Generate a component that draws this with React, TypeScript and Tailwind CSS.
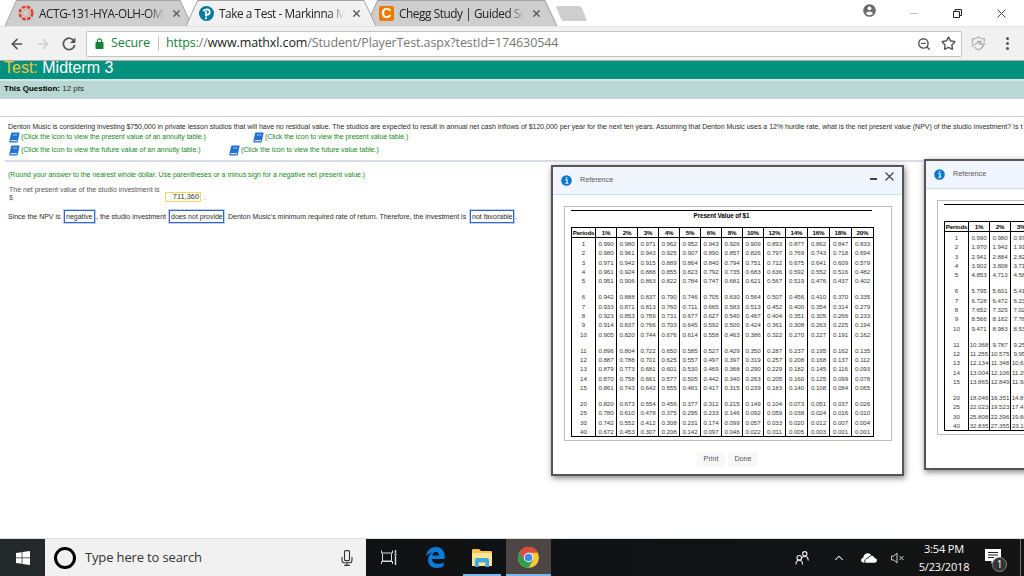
import type { ReactNode } from 'react';
import { ArrowLeft, ArrowRight, ChevronUp, Star, X, ZoomOut } from 'lucide-react';
import { clsx } from 'clsx';

const pvRates = ['1%', '2%', '3%', '4%', '5%', '6%', '8%', '10%', '12%', '14%', '16%', '18%', '20%'];

const pvBlocks = [
  [
    '1 0.990 0.980 0.971 0.962 0.952 0.943 0.926 0.909 0.893 0.877 0.862 0.847 0.833',
    '2 0.980 0.961 0.943 0.925 0.907 0.890 0.857 0.826 0.797 0.769 0.743 0.718 0.694',
    '3 0.971 0.942 0.915 0.889 0.864 0.840 0.794 0.751 0.712 0.675 0.641 0.609 0.579',
    '4 0.961 0.924 0.888 0.855 0.823 0.792 0.735 0.683 0.636 0.592 0.552 0.516 0.482',
    '5 0.951 0.906 0.863 0.822 0.784 0.747 0.681 0.621 0.567 0.519 0.476 0.437 0.402',
  ],
  [
    '6 0.942 0.888 0.837 0.790 0.746 0.705 0.630 0.564 0.507 0.456 0.410 0.370 0.335',
    '7 0.933 0.871 0.813 0.760 0.711 0.665 0.583 0.513 0.452 0.400 0.354 0.314 0.279',
    '8 0.923 0.853 0.789 0.731 0.677 0.627 0.540 0.467 0.404 0.351 0.305 0.266 0.233',
    '9 0.914 0.837 0.766 0.703 0.645 0.592 0.500 0.424 0.361 0.308 0.263 0.225 0.194',
    '10 0.905 0.820 0.744 0.676 0.614 0.558 0.463 0.386 0.322 0.270 0.227 0.191 0.162',
  ],
  [
    '11 0.896 0.804 0.722 0.650 0.585 0.527 0.429 0.350 0.287 0.237 0.195 0.162 0.135',
    '12 0.887 0.788 0.701 0.625 0.557 0.497 0.397 0.319 0.257 0.208 0.168 0.137 0.112',
    '13 0.879 0.773 0.681 0.601 0.530 0.469 0.368 0.290 0.229 0.182 0.145 0.116 0.093',
    '14 0.870 0.758 0.661 0.577 0.505 0.442 0.340 0.263 0.205 0.160 0.125 0.099 0.078',
    '15 0.861 0.743 0.642 0.555 0.481 0.417 0.315 0.239 0.183 0.140 0.108 0.084 0.065',
  ],
  [
    '20 0.820 0.673 0.554 0.456 0.377 0.312 0.215 0.149 0.104 0.073 0.051 0.037 0.026',
    '25 0.780 0.610 0.478 0.375 0.295 0.233 0.146 0.092 0.059 0.038 0.024 0.016 0.010',
    '30 0.742 0.552 0.412 0.308 0.231 0.174 0.099 0.057 0.033 0.020 0.012 0.007 0.004',
    '40 0.672 0.453 0.307 0.208 0.142 0.097 0.046 0.022 0.011 0.005 0.003 0.001 0.001',
  ],
];

const annuityRates = ['1%', '2%', '3%'];

const annuityBlocks = [
  ['1 0.990 0.980 0.971', '2 1.970 1.942 1.913', '3 2.941 2.884 2.829', '4 3.902 3.808 3.717', '5 4.853 4.713 4.580'],
  ['6 5.795 5.601 5.417', '7 6.728 6.472 6.230', '8 7.652 7.325 7.020', '9 8.566 8.162 7.786', '10 9.471 8.983 8.530'],
  [
    '11 10.368 9.787 9.253',
    '12 11.255 10.575 9.954',
    '13 12.134 11.348 10.635',
    '14 13.004 12.106 11.296',
    '15 13.865 12.849 11.938',
  ],
  ['20 18.046 16.351 14.877', '25 22.023 19.523 17.413', '30 25.808 22.396 19.600', '40 32.835 27.355 23.115'],
];

function ChromeTab({ icon, title, active, className }: { icon: ReactNode; title: string; active?: boolean; className: string }) {
  return (
    <div className={clsx('relative h-[26px] shrink-0', className)}>
      <svg className="absolute inset-0 h-full w-full" viewBox="0 0 190 26" preserveAspectRatio="none">
        <path
          d="M0 26 L11.5 0.5 H178 L190 26"
          fill={active ? '#f1f1f1' : '#cecece'}
          stroke="#a3a3a3"
          strokeWidth="1"
        />
      </svg>
      <div className="relative flex h-full items-center pl-[13px]">
        {icon}
        <div className="ml-[5px] w-[127px] [mask-image:linear-gradient(to_right,black_86%,transparent_99%)] text-[11.8px] leading-[26px] tracking-[-0.42px] whitespace-nowrap text-[#222]">
          {title}
        </div>
        <X className="ml-[5px] h-[11px] w-[11px] shrink-0 text-[#555]" strokeWidth={2.6} />
      </div>
    </div>
  );
}

function CanvasLogo() {
  return (
    <svg className="h-4 w-4 shrink-0" viewBox="0 0 16 16">
      <circle cx="8" cy="8" r="6.3" fill="none" stroke="#e2402f" strokeWidth="2.6" strokeDasharray="3.6 1.35" />
      <circle cx="8" cy="8" r="3.5" fill="none" stroke="#e2402f" strokeWidth="1" strokeDasharray="1 1.75" />
    </svg>
  );
}

function PearsonLogo() {
  return (
    <svg className="h-[15px] w-[15px] shrink-0" viewBox="0 0 15 15">
      <circle cx="7.5" cy="7.5" r="7.5" fill="#047a9c" />
      <path d="M4.3 5.2 Q5.5 3.4 7.9 3.4 Q10.8 3.6 10.8 6.2 Q10.6 8.7 7.6 8.8" fill="none" stroke="#fff" strokeWidth="1.8" />
      <path d="M7 5.2 V10.6" stroke="#fff" strokeWidth="1.9" />
      <circle cx="7" cy="12.3" r="1" fill="#fff" />
    </svg>
  );
}

function CheggLogo() {
  return (
    <div className="flex h-[15px] w-[15px] shrink-0 items-center justify-center rounded-[2px] bg-[#f07a00] font-['Liberation_Sans',sans-serif] text-[14px] leading-none font-bold text-white">
      C
    </div>
  );
}

function TitleBar() {
  return (
    <div className="flex h-[26px] items-start bg-white">
      <ChromeTab className="ml-[5px] w-[187px]" icon={<CanvasLogo />} title="ACTG-131-HYA-OLH-OMI" />
      <ChromeTab className="z-10 -ml-[6px] w-[190px]" icon={<PearsonLogo />} title="Take a Test - Markinna Mc" active />
      <ChromeTab className="-ml-[10px] w-[191px]" icon={<CheggLogo />} title="Chegg Study | Guided Sol" />
      <svg className="mt-[6px] -ml-[2px] h-[15px] w-[32px] shrink-0" viewBox="0 0 32 15">
        <path d="M1 0 H24 Q26 0 27 2 L32 15 H9 Q7 15 6 13 Z" fill="#cecece" />
      </svg>
      <div className="flex-1" />
      <svg className="mt-[4px] mr-[34px] h-[13px] w-[13px]" viewBox="0 0 13 13">
        <circle cx="6.5" cy="6.5" r="6.3" fill="#6b6b6b" />
        <circle cx="6.5" cy="4.3" r="1.9" fill="#fff" />
        <path d="M2.8 9.3 Q4.2 7.4 6.5 7.4 T10.2 9.3 Q8.8 11.3 6.5 11.3 T2.8 9.3 Z" fill="#fff" />
      </svg>
      <div className="mt-[13px] mr-[35px] h-px w-[8px] bg-[#c4c4c4]" />
      <svg className="mt-[9px] mr-[35px] h-[9px] w-[9px]" viewBox="0 0 9 9" fill="none" stroke="#222">
        <path d="M0.5 2.5 H6.5 V8.5 H0.5 Z M2 2.5 V0.5 H8.5 V6.5 H6.5" />
      </svg>
      <svg className="mt-[9px] mr-[18px] h-[9px] w-[9px]" viewBox="0 0 9 9" stroke="#444">
        <path d="M0.5 0.5 L8.5 8.5 M8.5 0.5 L0.5 8.5" />
      </svg>
    </div>
  );
}

function Toolbar() {
  return (
    <div className="flex h-[35px] items-center border-t border-b border-t-[#e3e3e3] border-b-[#aaaaaa] bg-[#f1f1f1]">
      <ArrowLeft className="ml-[9px] h-[16px] w-[16px] text-[#555]" strokeWidth={2.4} />
      <ArrowRight className="ml-[10px] h-[16px] w-[16px] text-[#d0d0d0]" strokeWidth={2.4} />
      <svg className="ml-[11px] h-[14px] w-[14px]" viewBox="0 0 14 14">
        <path d="M12 4 A5.7 5.7 0 1 0 12.7 8" fill="none" stroke="#555" strokeWidth="1.7" />
        <path d="M13.4 0.6 V6 H8 Z" fill="#555" />
      </svg>
      <div className="ml-[10px] flex h-[26px] w-[876px] items-center rounded-[2px] border border-[#c4c4c4] bg-white text-[12.5px] tracking-[-0.11px]">
        <svg className="ml-[8px] h-[11px] w-[9px]" viewBox="0 0 8 11">
          <rect y="4" width="8" height="7" rx="0.8" fill="#148038" />
          <path d="M2 4.5 V2.8 A2 2 0 0 1 6 2.8 V4.5" fill="none" stroke="#148038" strokeWidth="1.2" />
        </svg>
        <span className="ml-[7px] w-[40px] text-[#148038]">Secure</span>
        <span className="ml-[7px] h-[15px] w-px bg-[#c4c4c4]" />
        <span className="ml-[7px] whitespace-nowrap text-[#777]">
          <span className="text-[#148038]">https</span>://<span className="text-[#222]">www.mathxl.com</span>
          /Student/PlayerTest.aspx?testId=174630544
        </span>
        <ZoomOut className="ml-auto h-[14px] w-[14px] text-[#555]" strokeWidth={2.4} />
        <Star className="mr-[5px] ml-[10px] h-[15px] w-[15px] text-[#555]" strokeWidth={2.3} />
      </div>
      <svg className="ml-[9px] h-[15px] w-[15px]" viewBox="0 0 15 15" fill="none" stroke="#b0b0b0" strokeWidth="1.3">
        <path d="M1.5 8 V3 Q5 3 7.5 1 Q10 3 13.3 3 V6 M12.8 8.5 Q11.5 12.5 7.5 14 Q5 13.2 3.6 11.2" />
        <path d="M0.5 10.5 L9.5 5 M6 5.3 H10 L8.5 8 H14.5" />
      </svg>
      <div className="ml-[20px] flex flex-col gap-[2px]">
        <span className="h-[3px] w-[3px] rounded-full bg-[#555]" />
        <span className="h-[3px] w-[3px] rounded-full bg-[#555]" />
        <span className="h-[3px] w-[3px] rounded-full bg-[#555]" />
      </div>
    </div>
  );
}

function BookLink({ children, className }: { children: ReactNode; className?: string }) {
  return (
    <span className={clsx('flex items-center tracking-[-0.03px] text-[#15891a]', className)}>
      <svg className="mr-[1px] h-[11px] w-[11px] shrink-0" viewBox="0 0 11 11">
        <path d="M3 0.5 H10.2 Q10.8 0.5 10.6 1.2 L8.8 9.6 Q8.6 10.5 7.8 10.5 H1.2 Q0 10.5 0.3 9.3 L2 1.4 Q2.2 0.5 3 0.5 Z" fill="#2472cf" />
        <path d="M4 3 H8.4" stroke="#9cc4f2" strokeWidth="1" />
        <path d="M1.6 8.7 H8" stroke="#fff" strokeWidth="1" />
      </svg>
      {children}
    </span>
  );
}

function Choice({ children, className }: { children: ReactNode; className: string }) {
  return (
    <span className={clsx('inline-flex h-[13px] shrink-0 items-center border border-[#3465cb] pl-px ring-1 ring-[#3465cb]/30', className)}>
      {children}
    </span>
  );
}

function Question() {
  return (
    <div className="text-[7px] leading-[10px] whitespace-nowrap text-[#2b2b2b]">
      <div className="h-[20px] border-b-2 border-[#d5e8e6] bg-[#00917f] pl-[4px] text-[16px] leading-[13px] text-white">
        <span className="text-[#f4c542]">Test:</span> Midterm 3
      </div>
      <div className="h-[18px] border-b border-[#cdd3e2] bg-[#b9d8d3] pl-[4px] text-[8px] leading-[15px]">
        <b className="text-black">This Question:</b> 12 pts
      </div>
      <div className="mt-[17px] border-t border-[#ccd0dc] pt-[5px] pl-[8px]">
        <p className="tracking-[-0.015px]">
          Denton Music is considering investing $750,000 in private lesson studios that will have no residual value. The
          studios are expected to result in annual net cash inflows of $120,000 per year for the next ten years. Assuming
          that Denton Music uses a 12% hurdle rate, what is the net present value (NPV) of the studio investment? Is t
        </p>
        <div className="flex h-[10px] pl-[1px]">
          <BookLink className="w-[244px]">(Click the icon to view the present value of an annuity table.)</BookLink>
          <BookLink>(Click the icon to view the present value table.)</BookLink>
        </div>
        <div className="mt-[3px] flex h-[10px] pl-[1px]">
          <BookLink className="w-[220px]">(Click the icon to view the future value of an annuity table.)</BookLink>
          <BookLink>(Click the icon to view the future value table.)</BookLink>
        </div>
      </div>
      <div className="mt-[5px] ml-[5px] border-t-2 border-[#d9dee6] pt-[8px] pl-[3px]">
        <p className="text-[#15891a]">
          (Round your answer to the nearest whole dollar. Use parentheses or a minus sign for a negative net present value.)
        </p>
        <div className="mt-[6px] flex items-start pl-[1px] leading-[8px] text-[#555]">
          <div className="w-[156px]">
            The net present value of the studio investment is
            <br />$
          </div>
          <div className="mt-[6px] flex h-[10px] w-[36px] items-center justify-end border border-[#f5d94e] pr-[1px] text-[7.4px] text-[#333]">
            711,360
          </div>
          <span className="mt-[8px] ml-[3px]">.</span>
        </div>
        <div className="mt-[8px] flex h-[13px] items-center">
          <span className="w-[56px] shrink-0">Since the NPV is</span>
          <Choice className="w-[31px]">negative</Choice>
          <span className="ml-[1px] w-[73px] shrink-0">, the studio investment</span>
          <Choice className="w-[55px]">does not provide</Choice>
          <span className="ml-[4px] w-[242px] shrink-0">
            Denton Music's minimum required rate of return. Therefore, the investment is
          </span>
          <Choice className="w-[44px]">not favorable</Choice>
          <span className="ml-[1px]">.</span>
        </div>
      </div>
    </div>
  );
}

function FactorTable({ rates, blocks }: { rates: string[]; blocks: string[][] }) {
  const colWidth = (i: number) => (i === 0 ? 23 : i < 9 ? 21 : 22);

  return (
    <div className="mt-[7px] flex w-max border border-black text-[6.2px] tracking-[-0.05px] text-[#3a3a3a]">
      {['Periods', ...rates].map((head, col) => (
        <div
          key={head}
          className={clsx('shrink-0 text-center', col > 0 && 'border-l border-black')}
          style={{ width: colWidth(col) }}
        >
          <div className="mb-px h-[10px] border-b border-black text-[6.2px] leading-[10px] font-bold tracking-[-0.15px] text-black">
            {head}
          </div>
          {blocks.map((rows, b) => (
            <div key={b} className={clsx(b > 0 && 'pt-[6.6px]')}>
              {rows.map((row) => (
                <div key={row} className="h-[9.35px] leading-[9.35px]">
                  {row.split(' ')[col]}
                </div>
              ))}
            </div>
          ))}
        </div>
      ))}
    </div>
  );
}

function ReferenceWindow({ title, rates, blocks, className }: { title: string; rates: string[]; blocks: string[][]; className: string }) {
  return (
    <div
      className={clsx(
        'absolute h-[311px] w-[353px] border-2 border-[#555] bg-white shadow-[1px_2px_6px_rgba(0,0,0,0.5)]',
        className
      )}
    >
      <div className="flex h-[28px] items-center border-b border-[#c9dff2] bg-[#f1f5fd] pl-[8px] text-[7.2px] text-[#555]">
        <svg className="mr-[8px] h-[11px] w-[11px]" viewBox="0 0 11 11">
          <circle cx="5.5" cy="5.5" r="5.3" fill="#0b78d0" />
          <path d="M4.3 4.8 H6.1 V8.2 M4.2 8.2 H7.3" fill="none" stroke="#fff" strokeWidth="1.1" />
          <circle cx="5.6" cy="2.8" r="0.8" fill="#fff" />
        </svg>
        <span>Reference</span>
        <div className="mt-[-3px] ml-auto h-[2px] w-[7px] bg-[#444]" />
        <svg className="mt-[-9px] mr-[8px] ml-[8px] h-[9px] w-[9px]" viewBox="0 0 9 9" stroke="#444" strokeWidth="1.2">
          <path d="M0.5 0.5 L8.5 8.5 M8.5 0.5 L0.5 8.5" />
        </svg>
      </div>
      <div className="mt-[11px] ml-[11px] h-[235px] w-[328px] border border-[#bdbdbd] pt-[3px] pl-[6px]">
        <div className="h-[10px] w-[301px] border-t border-black text-center text-[6.3px] leading-[10px] font-bold tracking-[-0.1px] text-black">
          {title}
        </div>
        <FactorTable rates={rates} blocks={blocks} />
      </div>
      <div className="mt-[11px] flex justify-center gap-[3px] text-[7.2px] text-[#555]">
        <button className="h-[15px] w-[28px] bg-[#f8f8f8]">Print</button>
        <button className="h-[15px] w-[30px] bg-[#f8f8f8]">Done</button>
      </div>
    </div>
  );
}

function Taskbar() {
  return (
    <div className="flex h-[38px] items-stretch border-t border-[#dcdcdc] bg-linear-to-r from-[#15100e] via-[#0f1214] to-[#141414] text-white">
      <div className="flex w-[45px] items-center justify-center bg-[#23282a]">
        <svg className="h-[14px] w-[14px]" viewBox="0 0 14 14" fill="#fff">
          <path d="M0 2 L5.7 1.2 V6.6 H0 Z M6.4 1.1 L14 0 V6.6 H6.4 Z M0 7.3 H5.7 V12.7 L0 12 Z M6.4 7.3 H14 V14 L6.4 12.9 Z" />
        </svg>
      </div>
      <div className="flex w-[321px] items-center bg-[#f1f1f1] text-[#333]">
        <div className="ml-[9px] h-[22px] w-[22px] rounded-full border-[3px] border-black" />
        <span className="ml-[9px] pt-px text-[13px] tracking-[-0.15px]">Type here to search</span>
        <svg className="mr-[13px] ml-auto h-[16px] w-[12px]" viewBox="0 0 12 16" fill="none" stroke="#333" strokeWidth="1.1">
          <rect x="3.5" y="0.6" width="5" height="10" rx="1" />
          <path d="M1 7 V10 Q1 12.8 3.5 12.8 H8.5 Q11 12.8 11 10 V7 M6 13 V15.4 M3.2 15.4 H8.8" />
        </svg>
      </div>
      <div className="flex w-[45px] items-center justify-center">
        <svg className="h-[15px] w-[16px]" viewBox="0 0 16 15" fill="none" stroke="#ddd">
          <path d="M0.5 0.5 V3 H11.5 V0.5 M1.5 3.5 V11 H10.5 V3.5 M0.5 14 V11.5 H11.5 V14" />
          <path d="M14.5 0 V3 M14.5 6 V15" strokeWidth="1.4" />
          <path d="M13.5 4.5 H15.5" strokeWidth="2" />
        </svg>
      </div>
      <div className="flex w-[50px] items-center justify-center pr-[2px]">
        <svg className="h-[21px] w-[19px]" viewBox="0 0 19 21">
          <path
            d="M0 9.3 C0.6 4 4.2 0 9.8 0 C15.5 0 18.7 4 18.7 9 V12 H6 C6.3 15.3 8.9 16.8 12 16.8 C14.3 16.8 16.1 16.1 17.6 15.2 V19.3 C15.7 20.4 13.4 21 11 21 C5.4 21 2 17.6 2 13 C2 9.6 3.8 7.2 6.7 5.6 C4.2 5.9 1.7 7 0 9.3 Z M6.2 8.5 H13 C13 6.4 12 4.9 9.8 4.9 C7.8 4.9 6.5 6.5 6.2 8.5 Z"
            fill="#0a7bd8"
            fillRule="evenodd"
          />
        </svg>
      </div>
      <div className="ml-[2px] flex w-[38px] items-center justify-center border-b-2 border-[#76b9ed] pt-[2px]">
        <svg className="h-[18px] w-[20px]" viewBox="0 0 20 18">
          <path d="M0 1 Q0 0 1 0 H7 L9 2 H19 Q20 2 20 3 V17 H0 Z" fill="#f5c64d" />
          <path d="M0 4 H20 V17 H0 Z" fill="#fde593" />
          <path d="M3 18 V11 Q3 9 5 9 H15 Q17 9 17 11 V18 H13.3 V13.5 H6.7 V18 Z" fill="#3fa9e0" />
        </svg>
      </div>
      <div className="ml-[5px] flex w-[45px] items-center justify-center border-b-2 border-[#76b9ed] bg-[#4d4645] pt-[2px]">
        <svg className="h-[21px] w-[21px]" viewBox="0 0 22 22">
          <circle cx="11" cy="11" r="11" fill="#fbc934" />
          <path d="M11 11 L1.5 5.5 A11 11 0 0 0 11 22 L15.8 13.7 Z" fill="#2ba24c" />
          <path d="M11 6 H20.8 A11 11 0 0 0 1.5 5.5 L6.3 13.5 L11 11 Z" fill="#dd4b3e" />
          <circle cx="11" cy="11" r="5" fill="#fff" />
          <circle cx="11" cy="11" r="4" fill="#4688f1" />
        </svg>
      </div>
      <div className="ml-auto flex items-center">
        <svg className="h-[14px] w-[14px]" viewBox="0 0 14 14" fill="none" stroke="#eee" strokeWidth="1.1">
          <circle cx="4.3" cy="6.8" r="2.3" />
          <circle cx="9.8" cy="2.8" r="2.2" />
          <path d="M0.9 13.5 Q1 9.2 4.3 9.2 T7.5 13.5 M7.2 6.8 Q8 5.2 9.8 5.2 Q13 5.4 13.3 9.5" />
        </svg>
        <ChevronUp className="ml-[23px] h-[14px] w-[14px]" strokeWidth={1.8} />
        <svg className="ml-[15px] h-[10px] w-[16px]" viewBox="0 0 16 10">
          <path d="M2 9.5 Q0 9 0 7 Q0.3 5 2.2 4.8 Q2.7 1 6.2 0.3 Q9 0 10.5 2.5 Q13 2.5 13.6 5 Q16 5.3 16 7.5 Q15.7 9.5 14 9.8 H4 Z" fill="#fff" />
          <path d="M4 10 Q3 5.7 7 5 Q8.4 2.8 10.5 2.6" fill="none" stroke="#141414" strokeWidth="0.9" />
        </svg>
        <svg className="ml-[14px] h-[12px] w-[14px]" viewBox="0 0 14 12" fill="none" stroke="#ccc">
          <path d="M0.5 4 H3 L6 1 V11 L3 8 H0.5 Z M8.5 4 L12.5 8 M12.5 4 L8.5 8" />
        </svg>
        <div className="ml-[7px] w-[64px] text-center text-[11px] leading-[18px] tracking-[-0.15px]">
          <div>3:54 PM</div>
          <div>5/23/2018</div>
        </div>
        <div className="relative ml-[9px] h-[20px] w-[22px]">
          <svg className="h-[16px] w-[16px]" viewBox="0 0 16 16">
            <path d="M0 1 H16 V13 H9 L6.5 16 V13 H0 Z" fill="#fff" />
            <path d="M3 4.5 H13 M3 7 H13 M3 9.5 H9" stroke="#222" />
          </svg>
          <span className="absolute right-0 -bottom-[4px] flex h-[15px] w-[15px] items-center justify-center rounded-full border border-[#888] bg-[#333] text-[10px]">
            1
          </span>
        </div>
        <div className="ml-[13px] h-full w-px bg-[#777]" />
        <div className="w-[3px]" />
      </div>
    </div>
  );
}

export default function App() {
  return (
    <div className="flex h-[576px] w-[1024px] flex-col overflow-hidden bg-white font-['Open_Sans',sans-serif]">
      <TitleBar />
      <Toolbar />
      <main className="relative flex-1 overflow-hidden font-['Liberation_Sans',Arial,sans-serif]">
        <Question />
        <ReferenceWindow className="top-[104px] left-[551px]" title="Present Value of $1" rates={pvRates} blocks={pvBlocks} />
        <ReferenceWindow className="top-[98px] left-[924px]" title="" rates={annuityRates} blocks={annuityBlocks} />
      </main>
      <Taskbar />
    </div>
  );
}
